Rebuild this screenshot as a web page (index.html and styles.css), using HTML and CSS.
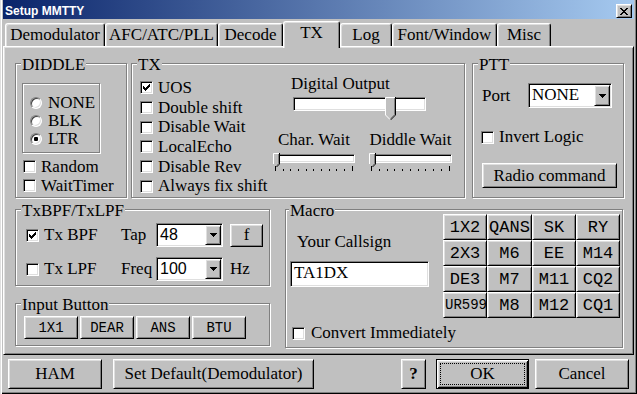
FILE: index.html
```html
<!DOCTYPE html>
<html>
<head>
<meta charset="utf-8">
<title>Setup MMTTY</title>
<link rel="stylesheet" href="styles.css">
</head>
<body>
<div class="window">
  <div class="titlebar">
    <span class="title-text">Setup MMTTY</span>
    <span class="btn close-btn"><svg width="8" height="7" viewBox="0 0 8 7"><path fill="#000" d="M0 0h2v1H0z M6 0h2v1H6z M1 1h2v1H1z M5 1h2v1H5z M2 2h4v1H2z M3 3h2v1H3z M2 4h4v1H2z M1 5h2v1H1z M5 5h2v1H5z M0 6h2v1H0z M6 6h2v1H6z"/></svg></span>
  </div>
  <div class="tabs">
    <div class="tab t-demod">Demodulator</div>
    <div class="tab t-afc">AFC/ATC/PLL</div>
    <div class="tab t-decode">Decode</div>
    <div class="tab sel t-tx">TX</div>
    <div class="tab t-log">Log</div>
    <div class="tab t-font">Font/Window</div>
    <div class="tab t-misc">Misc</div>
  </div>
  <div class="panel">
    <div class="row1">
      <div class="group g-diddle">
        <span class="gtitle">DIDDLE</span>
        <div class="radiobox">
          <div class="radio-row"><span class="rb"></span>NONE</div>
          <div class="radio-row"><span class="rb"></span>BLK</div>
          <div class="radio-row"><span class="rb on"></span>LTR</div>
        </div>
        <div class="diddle-checks">
          <div class="check"><span class="cb"></span>Random</div>
          <div class="check"><span class="cb"></span>WaitTimer</div>
        </div>
      </div>
      <div class="group g-tx">
        <span class="gtitle">TX</span>
        <div class="txchecks">
          <div class="check"><span class="cb"><svg width="7" height="7" viewBox="0 0 7 7"><path fill="#000" d="M0 2h1v3H0z M1 3h1v3H1z M2 4h1v3H2z M3 3h1v3H3z M4 2h1v3H4z M5 1h1v3H5z M6 0h1v3H6z"/></svg></span>UOS</div>
          <div class="check"><span class="cb"></span>Double shift</div>
          <div class="check"><span class="cb"></span>Disable Wait</div>
          <div class="check"><span class="cb"></span>LocalEcho</div>
          <div class="check"><span class="cb"></span>Disable Rev</div>
          <div class="check"><span class="cb"></span>Always fix shift</div>
        </div>
        <div class="txright">
          <div class="dig-label">Digital Output</div>
          <div class="slider slider-big">
            <div class="track"></div>
            <svg class="thumb thumb-big" width="11" height="23" viewBox="0 0 11 23">
              <polygon points="0,0 11,0 11,18 5.5,23 0,18" fill="#c0c0c0"/>
              <path d="M0.5 18V0.5H10" stroke="#fff" fill="none"/>
              <path d="M10.5 0V18L5.5 23" stroke="#000" fill="none"/>
              <path d="M9.5 1V17.6L5.5 21.6" stroke="#808080" fill="none"/>
              <path d="M0.5 18L5 22.5" stroke="#fff" fill="none"/>
            </svg>
          </div>
          <div class="waits">
            <div class="wait-col w1">
              <div class="wait-label">Char. Wait</div>
              <div class="slider slider-small">
                <div class="track"></div>
                <svg class="thumb" width="7" height="14" viewBox="0 0 7 14">
                  <polygon points="0,0 7,0 7,11 3.5,14 0,11" fill="#c0c0c0"/>
                  <path d="M0.5 11V0.5H6" stroke="#fff" fill="none"/>
                  <path d="M6.5 0V11L3.5 14" stroke="#000" fill="none"/>
                  <path d="M5.5 1V10.6L3.5 12.6" stroke="#808080" fill="none"/>
                </svg>
                <svg class="ticks" width="82" height="5" viewBox="0 0 82 5"><path fill="#000" d="M2 0h1v5H2z M10 3h1v2h-1z M17 3h1v2h-1z M25 3h1v2h-1z M33 3h1v2h-1z M40 3h1v2h-1z M48 3h1v2h-1z M56 3h1v2h-1z M63 3h1v2h-1z M71 3h1v2h-1z M79 0h1v5h-1z"/></svg>
              </div>
            </div>
            <div class="wait-col w2">
              <div class="wait-label">Diddle Wait</div>
              <div class="slider slider-small">
                <div class="track"></div>
                <svg class="thumb" width="7" height="14" viewBox="0 0 7 14">
                  <polygon points="0,0 7,0 7,11 3.5,14 0,11" fill="#c0c0c0"/>
                  <path d="M0.5 11V0.5H6" stroke="#fff" fill="none"/>
                  <path d="M6.5 0V11L3.5 14" stroke="#000" fill="none"/>
                  <path d="M5.5 1V10.6L3.5 12.6" stroke="#808080" fill="none"/>
                </svg>
                <svg class="ticks" width="83" height="5" viewBox="0 0 83 5"><path fill="#000" d="M2 0h1v5H2z M10 3h1v2h-1z M18 3h1v2h-1z M25 3h1v2h-1z M33 3h1v2h-1z M41 3h1v2h-1z M49 3h1v2h-1z M56 3h1v2h-1z M64 3h1v2h-1z M72 3h1v2h-1z M80 0h1v5h-1z"/></svg>
              </div>
            </div>
          </div>
        </div>
      </div>
      <div class="group g-ptt">
        <span class="gtitle">PTT</span>
        <div class="port-row">
          <span class="port-label">Port</span>
          <div class="combo combo-ptt"><span class="combo-text">NONE</span><span class="btn drop"><svg width="7" height="4" viewBox="0 0 7 4"><path fill="#000" d="M0 0h7v1H0z M1 1h5v1H1z M2 2h3v1H2z M3 3h1v1H3z"/></svg></span></div>
        </div>
        <div class="check invert"><span class="cb"></span>Invert Logic</div>
        <div class="btn radio-cmd">Radio command</div>
      </div>
    </div>
    <div class="row2">
      <div class="leftcol">
        <div class="group g-bpf">
          <span class="gtitle">TxBPF/TxLPF</span>
          <div class="bpf-grid">
            <div class="check"><span class="cb"><svg width="7" height="7" viewBox="0 0 7 7"><path fill="#000" d="M0 2h1v3H0z M1 3h1v3H1z M2 4h1v3H2z M3 3h1v3H3z M4 2h1v3H4z M5 1h1v3H5z M6 0h1v3H6z"/></svg></span>Tx BPF</div>
            <div class="flabel">Tap</div>
            <div class="combo combo-sm"><span class="combo-text sans">48</span><span class="btn drop"><svg width="7" height="4" viewBox="0 0 7 4"><path fill="#000" d="M0 0h7v1H0z M1 1h5v1H1z M2 2h3v1H2z M3 3h1v1H3z"/></svg></span></div>
            <div class="btn f-btn">f</div>
            <div class="check"><span class="cb"></span>Tx LPF</div>
            <div class="flabel">Freq</div>
            <div class="combo combo-sm"><span class="combo-text sans">100</span><span class="btn drop"><svg width="7" height="4" viewBox="0 0 7 4"><path fill="#000" d="M0 0h7v1H0z M1 1h5v1H1z M2 2h3v1H2z M3 3h1v1H3z"/></svg></span></div>
            <div class="hz">Hz</div>
          </div>
        </div>
        <div class="group g-inbtn">
          <span class="gtitle">Input Button</span>
          <div class="ibtns">
            <div class="btn ibtn">1X1</div>
            <div class="btn ibtn">DEAR</div>
            <div class="btn ibtn">ANS</div>
            <div class="btn ibtn">BTU</div>
          </div>
        </div>
      </div>
      <div class="group g-macro">
        <span class="gtitle gtitle-macro">Macro</span>
        <div class="macro-top">
          <div class="macro-left">
            <div class="cs-label">Your Callsign</div>
            <div class="edit">TA1DX</div>
          </div>
          <div class="mgrid">
            <div class="btn mbtn">1X2</div>
            <div class="btn mbtn">QANS</div>
            <div class="btn mbtn">SK</div>
            <div class="btn mbtn">RY</div>
            <div class="btn mbtn">2X3</div>
            <div class="btn mbtn">M6</div>
            <div class="btn mbtn">EE</div>
            <div class="btn mbtn">M14</div>
            <div class="btn mbtn">DE3</div>
            <div class="btn mbtn">M7</div>
            <div class="btn mbtn">M11</div>
            <div class="btn mbtn">CQ2</div>
            <div class="btn mbtn small">UR599</div>
            <div class="btn mbtn">M8</div>
            <div class="btn mbtn">M12</div>
            <div class="btn mbtn">CQ1</div>
          </div>
        </div>
        <div class="check macro-check"><span class="cb"></span>Convert Immediately</div>
      </div>
    </div>
  </div>
  <div class="bottombar">
    <div class="btn bbtn b-ham">HAM</div>
    <div class="btn bbtn b-def">Set Default(Demodulator)</div>
    <div class="btn bbtn b-help">?</div>
    <div class="btn bbtn b-ok">OK</div>
    <div class="btn bbtn b-cancel">Cancel</div>
  </div>
</div>
</body>
</html>
```
FILE: styles.css
```css
* { box-sizing: border-box; }
html, body { margin: 0; padding: 0; }
body {
  width: 637px;
  height: 394px;
  overflow: hidden;
  background: #c0c0c0;
  font-family: "Liberation Serif", "Times New Roman", serif;
  font-size: 17px;
  color: #000;
}
.window {
  width: 637px;
  height: 394px;
  padding: 0 3px 3px 3px;
  background: #c0c0c0;
  box-shadow: inset 1px 0 0 #dfdfdf, inset 2px 0 0 #fff, inset -1px -1px 0 #000, inset -2px -2px 0 #808080;
  display: flex;
  flex-direction: column;
}
.titlebar {
  flex: none;
  height: 19px;
  display: flex;
  justify-content: space-between;
  align-items: flex-start;
  background: linear-gradient(to right, #0a246a, #a6caf0);
}
.title-text {
  margin: 3px 0 0 2px;
  font: bold 12px/17px "Liberation Sans", Arial, sans-serif;
  color: #fff;
}
.btn {
  background: #c0c0c0;
  border: 1px solid;
  border-color: #fff #000 #000 #fff;
  box-shadow: inset 1px 1px 0 #dfdfdf, inset -1px -1px 0 #808080;
  display: flex;
  align-items: center;
  justify-content: center;
  white-space: nowrap;
}
.close-btn { width: 16px; height: 14px; margin: 4px 2px 0 0; }
.close-btn svg { display: block; }

.tabs {
  flex: none;
  height: 27px;
  display: flex;
  align-items: flex-end;
  padding-left: 2px;
  position: relative;
  z-index: 1;
}
.tab {
  height: 23px;
  border: 1px solid;
  border-bottom: 0;
  border-color: #fff #000 #000 #fff;
  border-radius: 3px 3px 0 0;
  box-shadow: inset 1px 1px 0 #dfdfdf, inset -1px 0 0 #808080;
  line-height: 21px;
  text-align: center;
  background: #c0c0c0;
  white-space: nowrap;
}
.tab.sel { height: 27px; margin-bottom: -2px; line-height: 22px; }
.t-demod { width: 100px; }
.t-afc { width: 113px; }
.t-decode { width: 65px; }
.t-tx { width: 57px; }
.t-log { width: 52px; }
.t-font { width: 105px; }
.t-misc { width: 54px; }

.panel {
  flex: none;
  height: 309px;
  border: 1px solid;
  border-color: #fff #000 #000 #fff;
  box-shadow: inset 1px 1px 0 #dfdfdf, inset -1px -1px 0 #808080;
  padding: 16px 0 0 11px;
}
.row1 { display: flex; height: 135px; }
.group {
  position: relative;
  border: 1px solid #808080;
  box-shadow: inset 1px 1px 0 #fff, 1px 1px 0 #fff;
}
.gtitle {
  position: absolute;
  top: -9px;
  left: 5px;
  padding: 0 1px;
  line-height: 19px;
  background: #c0c0c0;
  white-space: nowrap;
}
.gtitle-macro { left: 3px; }

.g-diddle { width: 112px; padding: 19px 0 0 6px; }
.radiobox {
  width: 78px;
  height: 70px;
  border: 1px solid #808080;
  box-shadow: inset 1px 1px 0 #fff, 1px 1px 0 #fff;
  padding: 10px 0 0 7px;
}
.radio-row { display: flex; align-items: center; height: 18px; gap: 6px; }
.rb {
  flex: none;
  width: 12px;
  height: 12px;
  border-radius: 50%;
  background: #fff;
  border: 1px solid;
  border-color: #808080 #fff #fff #808080;
  box-shadow: inset 1px 1px 0 #404040, inset -1px -1px 0 #dfdfdf;
  display: flex;
  align-items: center;
  justify-content: center;
}
.rb.on::after {
  content: "";
  width: 4px;
  height: 4px;
  border-radius: 1px;
  background: #000;
}
.diddle-checks { margin: 4px 0 0 1px; }
.check { display: flex; align-items: center; height: 19px; gap: 5px; white-space: nowrap; }
.cb {
  flex: none;
  width: 13px;
  height: 13px;
  background: #fff;
  border: 1px solid;
  border-color: #808080 #fff #fff #808080;
  box-shadow: inset 1px 1px 0 #000, inset -1px -1px 0 #dfdfdf;
  padding: 2px;
}
.cb svg { display: block; }

.g-tx { width: 334px; margin-left: 4px; display: flex; }
.txchecks { width: 141px; padding: 14px 0 0 8px; }
.txchecks .check { height: 19.7px; }
.txright { width: 191px; }
.dig-label { margin: 10px 0 0 18px; line-height: 19px; }
.slider { position: relative; }
.track {
  background: #fff;
  border: 1px solid;
  border-color: #808080 #fff #fff #808080;
  box-shadow: inset 1px 1px 0 #000, inset -1px -1px 0 #dfdfdf;
}
.slider-big { width: 133px; height: 23px; margin: 2px 0 0 20px; }
.slider-big .track { margin-top: 4px; height: 14px; }
.thumb { position: absolute; top: 0; left: 0; display: block; }
.thumb-big { left: 92px; }
.waits { display: flex; gap: 14px; margin-top: 10px; }
.wait-col { display: flex; flex-direction: column; }
.w1 { width: 82px; }
.w2 { width: 83px; }
.wait-label { line-height: 19px; text-align: center; white-space: nowrap; }
.slider-small { height: 18px; margin-top: 4px; }
.slider-small .track { margin-top: 1px; height: 9px; }
.ticks { position: absolute; left: 0; top: 13px; display: block; }

.g-ptt { width: 152px; margin-left: 7px; padding: 19px 0 0 9px; }
.port-row { display: flex; align-items: center; height: 25px; }
.port-label { width: 46px; }
.combo {
  display: flex;
  align-items: center;
  background: #fff;
  border: 1px solid;
  border-color: #808080 #fff #fff #808080;
  box-shadow: inset 1px 1px 0 #000, inset -1px -1px 0 #dfdfdf;
  padding: 1px;
}
.combo-text { flex: 1; padding: 0 0 1px 2px; white-space: nowrap; overflow: hidden; }
.combo-text.sans { font-family: "Liberation Sans", Arial, sans-serif; font-size: 16px; }
.drop { flex: none; width: 16px; align-self: stretch; }
.drop svg { display: block; }
.combo-ptt { width: 84px; height: 25px; }
.invert { margin: 19.5px 0 0 -1px; }
.radio-cmd { width: 135px; height: 25px; margin-top: 16.5px; }

.row2 { display: flex; margin-top: 11px; }
.leftcol { width: 255px; }
.g-bpf { height: 77px; }
.bpf-grid {
  display: grid;
  grid-template-columns: 95px 35px 67px 40px;
  grid-template-rows: 24px 24px;
  row-gap: 10px;
  align-items: center;
  padding: 13px 0 0 10px;
}
.combo-sm { width: 67px; height: 24px; }
.f-btn { width: 33px; height: 23px; margin-left: 7px; }
.hz { margin-left: 7px; }
.g-inbtn { height: 43px; margin-top: 17px; }
.ibtns { display: flex; gap: 2px; padding: 12px 0 0 8px; }
.ibtn {
  width: 54px;
  height: 23px;
  font-family: "Liberation Mono", "Courier New", monospace;
  font-size: 14px;
}

.g-macro { width: 338px; height: 139px; margin-left: 15px; }
.macro-top { display: flex; }
.macro-left { width: 157px; }
.cs-label { margin: 21.5px 0 0 11px; line-height: 19px; }
.edit {
  width: 139px;
  height: 26px;
  margin: 10.5px 0 0 4px;
  background: #fff;
  border: 1px solid;
  border-color: #808080 #fff #fff #808080;
  box-shadow: inset 1px 1px 0 #000, inset -1px -1px 0 #dfdfdf;
  padding: 0 0 3px 3px;
  display: flex;
  align-items: center;
}
.mgrid {
  display: grid;
  grid-template-columns: 44px 45px 44px 44px;
  grid-template-rows: repeat(4, 26px);
  margin-top: 4px;
}
.mbtn {
  font-family: "Liberation Mono", "Courier New", monospace;
  font-size: 17px;
  overflow: hidden;
}
.mbtn.small { font-size: 14px; justify-content: flex-start; padding-left: 1px; }
.macro-check { margin: 5.5px 0 0 6px; gap: 6px; }

.bottombar { flex: none; height: 36px; display: flex; padding: 4px 0 0 5px; }
.bbtn { height: 30px; }
.b-ham { width: 94px; }
.b-def { width: 201px; margin-left: 11px; }
.b-help { width: 25px; margin-left: 87px; font-weight: bold; }
.b-ok {
  width: 93px;
  margin-left: 10px;
  position: relative;
  border-color: #000;
  box-shadow: inset 1px 1px 0 #fff, inset -1px -1px 0 #000, inset 2px 2px 0 #dfdfdf, inset -2px -2px 0 #808080;
}
.b-ok::after {
  content: "";
  position: absolute;
  inset: 3px;
  border: 1px dotted #000;
}
.b-cancel { width: 94px; margin-left: 6px; }
```
